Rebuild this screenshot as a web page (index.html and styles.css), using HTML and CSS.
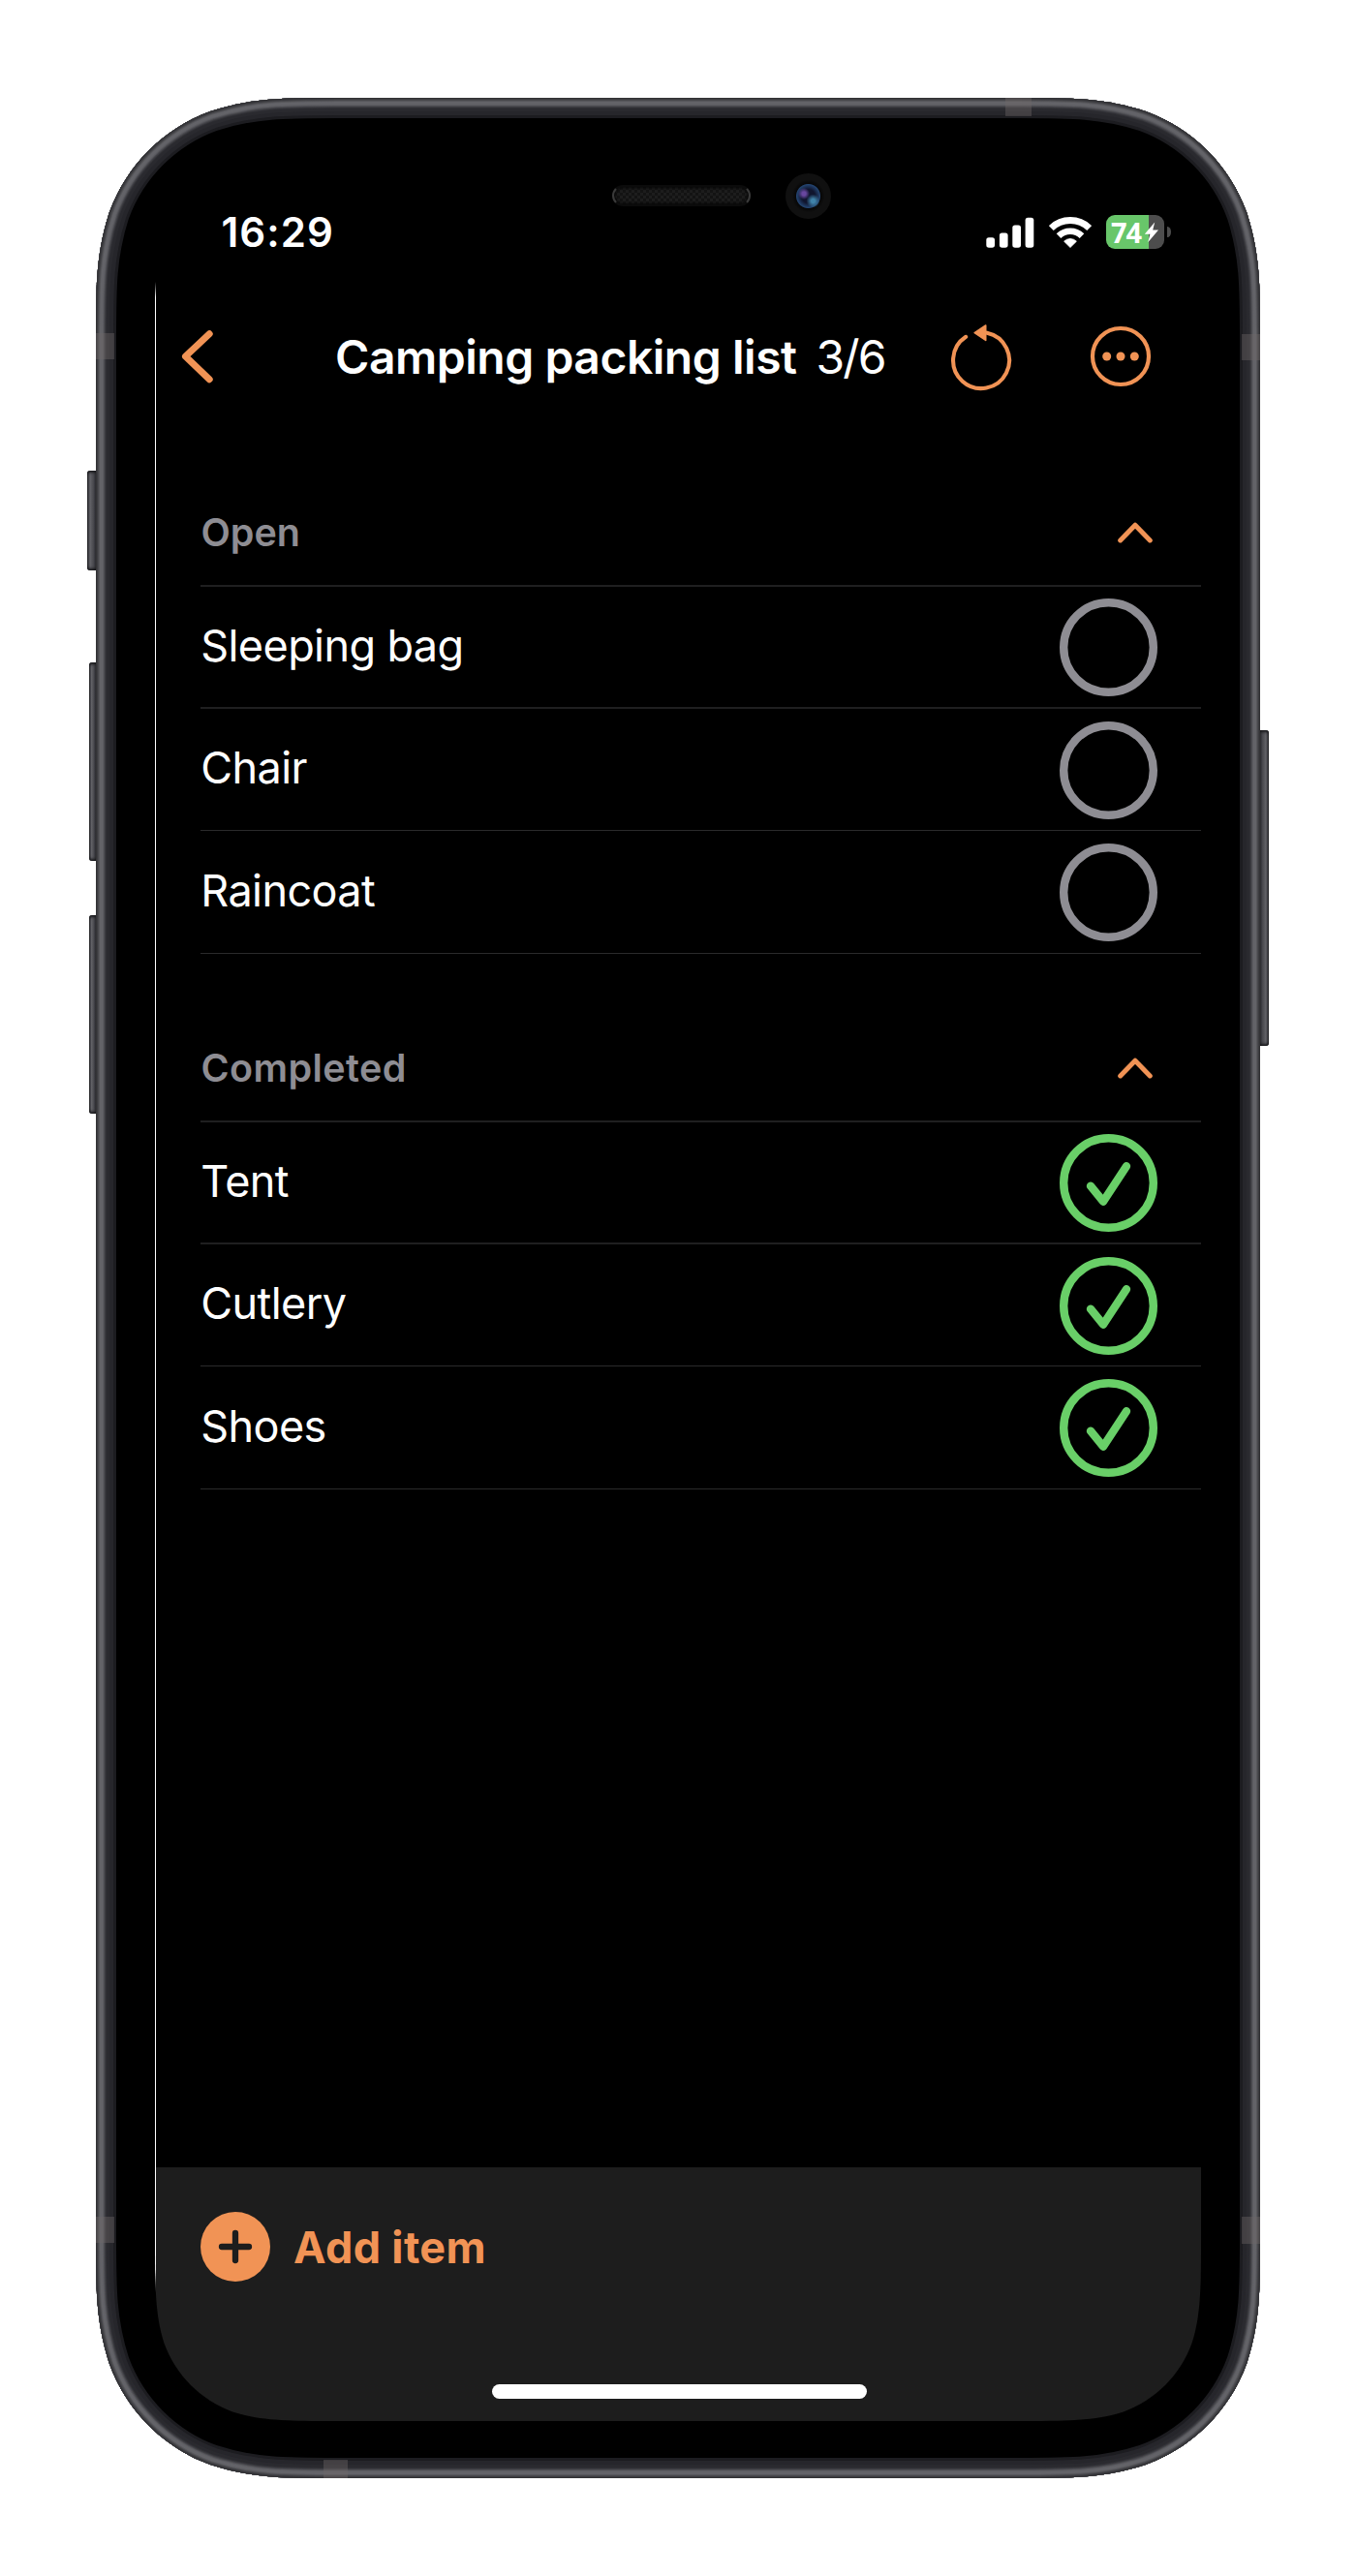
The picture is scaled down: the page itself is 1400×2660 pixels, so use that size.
FILE: index.html
```html
<!DOCTYPE html>
<html lang="en">
<head>
<meta charset="utf-8">
<title>Camping packing list</title>
<link rel="stylesheet" href="styles.css">
</head>
<body>
<div class="phone">
  <svg class="rim" width="1202" height="2458" viewBox="0 0 1202 2458">
    <defs>
      <path id="body" d="M0 250C0 195 0 161 14 118.1C31.6 69.7 69.7 31.6 118.1 14C161 0 195 0 250 0H952C1007 0 1041 0 1083.9 14C1132.3 31.6 1170.4 69.7 1188 118.1C1202 161 1202 195 1202 250V2208C1202 2263 1202 2297 1188 2339.9C1170.4 2388.3 1132.3 2426.4 1083.9 2444C1041 2458 1007 2458 952 2458H250C195 2458 161 2458 118.1 2444C69.7 2426.4 31.6 2388.3 14 2339.9C0 2297 0 2263 0 2208Z"/>
      <clipPath id="edge"><use href="#body"/></clipPath>
    </defs>
    <g clip-path="url(#edge)" fill="none">
      <use href="#body" fill="#000"/>
      <use href="#body" stroke="#1c1c20" stroke-width="42"/>
      <use href="#body" stroke="#26262b" stroke-width="36"/>
      <use href="#body" stroke="#2a2a2f" stroke-width="28"/>
      <use href="#body" stroke="#313136" stroke-width="22"/>
      <use href="#body" stroke="#3d3d42" stroke-width="20"/>
      <use href="#body" stroke="#4d4d52" stroke-width="18"/>
      <use href="#body" stroke="#5c5c61" stroke-width="16"/>
      <use href="#body" stroke="#636368" stroke-width="14"/>
      <use href="#body" stroke="#57575b" stroke-width="8"/>
      <use href="#body" stroke="#48484c" stroke-width="6"/>
      <use href="#body" stroke="#3c3c40" stroke-width="4"/>
      <use href="#body" stroke="#333336" stroke-width="2"/>
    </g>
  </svg>
  <span class="key key-mute"></span>
  <span class="key key-up"></span>
  <span class="key key-down"></span>
  <span class="key key-power"></span>
  <span class="band band-top"></span>
  <span class="band band-bottom"></span>
  <span class="band band-left-top"></span>
  <span class="band band-left-bottom"></span>
  <span class="band band-right-top"></span>
  <span class="band band-right-bottom"></span>
  <span class="speaker"></span>
  <span class="camera"></span>

  <main class="screen">
    <div class="status">
      <span class="time">16:29</span>
      <div class="status-icons">
        <svg class="signal" width="50" height="34" viewBox="0 0 50 34" fill="#fff">
          <rect x="0.3" y="22.2" width="8.7" height="10.5" rx="2.6"/>
          <rect x="13.9" y="17.5" width="8.7" height="15.2" rx="2.6"/>
          <rect x="27.3" y="9.5" width="8.7" height="23.2" rx="2.6"/>
          <rect x="40.6" y="1.8" width="8.7" height="30.9" rx="2.6"/>
        </svg>
        <svg class="wifi" width="44" height="34" viewBox="0 0 44 34" fill="none" stroke="#fff">
          <path d="M2.3 12.6A28.3 28.3 0 0 1 41.7 12.6" stroke-width="7"/>
          <path d="M10 20.6A17.2 17.2 0 0 1 34 20.6" stroke-width="6.6"/>
          <path d="M22 32.5L15.6 26.2A9 9 0 0 1 28.4 26.2Z" fill="#fff" stroke-width="0.8" stroke-linejoin="round"/>
        </svg>
        <div class="battery">
          <span class="level">74</span>
          <svg class="bolt" width="16" height="22" viewBox="0 0 16 22"><path d="M11.2 .6L.8 12.8H6.4L4.2 21.2L15 8.4H9.2Z" fill="#fff"/></svg>
        </div>
        <span class="nub"></span>
      </div>
    </div>

    <header class="nav">
      <svg class="back" width="34" height="56" viewBox="0 0 34 56"><path d="M29.2 4.8L4.5 28L29.2 51.7" fill="none" stroke="#f19355" stroke-width="7" stroke-linecap="round" stroke-linejoin="round"/></svg>
      <h1 class="title">Camping packing list</h1>
      <span class="count">3/6</span>
      <svg class="reset" width="64" height="72" viewBox="0 0 64 72">
        <path d="M16.2 15.8A29 29 0 1 0 38 11.7" fill="none" stroke="#f19355" stroke-width="4.1" stroke-linecap="round"/>
        <path d="M25.2 11.7L36.7 4V19.4Z" fill="#f19355" stroke="#f19355" stroke-width="1.6" stroke-linejoin="round"/>
      </svg>
      <svg class="more" width="64" height="64" viewBox="0 0 64 64" fill="#f19355">
        <circle cx="32" cy="32" r="29" fill="none" stroke="#f19355" stroke-width="4.2"/>
        <circle cx="17.7" cy="32" r="4.5"/><circle cx="32" cy="32" r="4.5"/><circle cx="46.3" cy="32" r="4.5"/>
      </svg>
    </header>

    <section class="group">
      <div class="group-head"><h2 class="group-name">Open</h2>
        <svg class="caret" width="36" height="22" viewBox="0 0 36 22"><path d="M2.7 18.9L18 3.2L33.3 18.9"/></svg></div>
      <ul class="items">
        <li class="item"><span class="label">Sleeping bag</span><svg class="check" viewBox="0 0 101 101"><circle cx="50.5" cy="50.5" r="46.3"/></svg></li>
        <li class="item"><span class="label">Chair</span><svg class="check" viewBox="0 0 101 101"><circle cx="50.5" cy="50.5" r="46.3"/></svg></li>
        <li class="item"><span class="label">Raincoat</span><svg class="check" viewBox="0 0 101 101"><circle cx="50.5" cy="50.5" r="46.3"/></svg></li>
      </ul>
    </section>

    <section class="group">
      <div class="group-head"><h2 class="group-name wide">Completed</h2>
        <svg class="caret" width="36" height="22" viewBox="0 0 36 22"><path d="M2.7 18.9L18 3.2L33.3 18.9"/></svg></div>
      <ul class="items">
        <li class="item"><span class="label">Tent</span><svg class="check done" viewBox="0 0 101 101"><circle cx="50.5" cy="50.5" r="46.3"/><path d="M32 53.7L45 69.7L69 33.2"/></svg></li>
        <li class="item"><span class="label">Cutlery</span><svg class="check done" viewBox="0 0 101 101"><circle cx="50.5" cy="50.5" r="46.3"/><path d="M32 53.7L45 69.7L69 33.2"/></svg></li>
        <li class="item"><span class="label">Shoes</span><svg class="check done" viewBox="0 0 101 101"><circle cx="50.5" cy="50.5" r="46.3"/><path d="M32 53.7L45 69.7L69 33.2"/></svg></li>
      </ul>
    </section>

    <footer class="toolbar">
      <div class="add">
        <svg class="plus" width="72" height="72" viewBox="0 0 72 72"><circle cx="36" cy="36" r="36" fill="#f19355"/><path d="M22 36H50M36 22V50" stroke="#1d1d1d" stroke-width="6.3" stroke-linecap="round"/></svg>
        <span class="add-label">Add item</span>
      </div>
      <span class="home"></span>
    </footer>
  </main>
</div>
</body>
</html>
```
FILE: styles.css
```css
* { box-sizing: border-box; }
body {
  margin: 0;
  padding: 101px 99px;
  background: #fff;
  color: #fff;
  font-family: Inter, "Liberation Sans", sans-serif;
}
h1, h2, ul { margin: 0; padding: 0; font: inherit; list-style: none; }
svg { display: block; flex: none; }

/* Device body: concentric strokes in .rim shade the metal edge */
.phone {
  position: relative;
  width: 1202px;
  height: 2458px;
  padding: 59px 61px;
}
.rim { position: absolute; left: 0; top: 0; }
.key {
  position: absolute;
  border-radius: 3px 0 0 3px;
  background: linear-gradient(90deg, #2b2b2e, #626267 35%, #505055 60%, #37373b);
  box-shadow: inset 0 3px 3px -1px #18181b, inset 0 -3px 3px -1px #18181b;
}
.key-mute { left: -9px; top: 385px; width: 9px; height: 103px; }
.key-up { left: -7px; top: 583px; width: 7px; height: 205px; }
.key-down { left: -7px; top: 844px; width: 7px; height: 205px; }
.key-power { right: -9px; top: 653px; width: 9px; height: 326px; transform: scaleX(-1); }

.band { position: absolute; width: 19px; height: 27px; background: rgba(112, 104, 104, .4); }
.band-top { left: 939px; top: 0; width: 27px; height: 19px; }
.band-bottom { left: 235px; bottom: 0; width: 25px; height: 19px; }
.band-left-top { left: 0; top: 243px; }
.band-left-bottom { left: 0; top: 2188px; }
.band-right-top { right: 0; top: 244px; }
.band-right-bottom { right: 0; top: 2188px; height: 28px; }

.speaker {
  position: absolute;
  left: 533px;
  top: 90px;
  width: 143px;
  height: 22px;
  border-radius: 11px;
  border: 2px solid #0b0b0b;
  border-left-color: #3a3a3a;
  border-right-color: #3a3a3a;
  background: repeating-conic-gradient(#1d1d1d 0 25%, #131313 0 50%) 0 0 / 6px 6px;
  box-shadow: inset 0 0 3px 1px #050505;
}
.camera {
  position: absolute;
  left: 712px;
  top: 78px;
  width: 47px;
  height: 47px;
  border-radius: 50%;
  background:
    radial-gradient(circle at 19px 21px, #68479f 0 2px, transparent 6px),
    radial-gradient(circle at 28.5px 28.5px, #3f82a8 0 2px, transparent 7px),
    radial-gradient(circle at 50% 50%, #10152e 0 7px, #23436f 12px, #070707 13px, #101010 17px);
}

.screen {
  position: relative;
  display: flex;
  flex-direction: column;
  width: 1080px;
  height: 2340px;
  clip-path: path("M0 0H1080V2145.9C1080 2201.8 1080 2229.7 1070.5 2259.8C1058.5 2292.7 1032.7 2318.5 999.8 2330.5C969.7 2340 941.8 2340 885.9 2340H194.1C138.2 2340 110.3 2340 80.2 2330.5C47.3 2318.5 21.5 2292.7 9.5 2259.8C0 2229.7 0 2201.8 0 2145.9Z");
}
/* Hairline along the display's left edge */
.screen::before {
  content: "";
  position: absolute;
  left: 0;
  top: 131px;
  width: 1px;
  height: 2077px;
  background: linear-gradient(transparent, #fff 16px, #fff calc(100% - 24px), transparent);
}

.status {
  display: flex;
  align-items: center;
  justify-content: space-between;
  height: 159px;
  padding: 0 31px 0 68.5px;
}
.time { font-size: 42px; font-weight: 600; letter-spacing: 1.05px; }
.status-icons { display: flex; align-items: center; }
.wifi { margin-left: 15px; }
.battery {
  display: flex;
  align-items: center;
  width: 60px;
  height: 35px;
  margin-left: 15px;
  padding-left: 5px;
  border-radius: 9px;
  background: linear-gradient(90deg, #68c66a 44px, #4d4d4d 44px);
}
.level { font: 700 29px/35px "Noto Sans", sans-serif; letter-spacing: -1.2px; }
.bolt { margin-left: 3px; }
.nub { width: 4px; height: 11px; margin-left: 3px; border-radius: 0 4px 4px 0 / 0 6px 6px 0; background: #4d4d4d; }

.nav { display: flex; align-items: center; height: 98px; padding-left: 27px; }
.title { margin-left: 125px; font-size: 48px; font-weight: 600; letter-spacing: -.47px; white-space: nowrap; }
.count { margin-left: 20px; font-size: 48px; letter-spacing: -1.9px; }
.reset { margin-left: auto; }
.more { margin: 0 51px 0 80px; }

.group { padding-left: 47px; }
.group + .group { margin-top: 62px; }
.nav + .group { margin-top: 77px; }
.group-head {
  display: flex;
  align-items: center;
  justify-content: space-between;
  height: 112px;
  padding: 2px 50px 0 0;
  border-bottom: 2px solid #1f1f20;
}
.group-name { padding-left: .5px; font-size: 39.5px; font-weight: 600; color: #8e8d93; }
.wide { letter-spacing: .42px; }
.caret { fill: none; stroke: #f19355; stroke-width: 5; stroke-linecap: round; stroke-linejoin: round; }
.item {
  display: flex;
  align-items: center;
  justify-content: space-between;
  height: 126px;
  padding-right: 45px;
  border-bottom: 1px solid #2a2a2b;
}
.item:first-child { border-bottom: 2px solid #1f1f20; }
.item:last-child { height: 127px; }
.label { padding: 0 0 4px .3px; font-size: 45px; letter-spacing: -.6px; }
.check { width: 101px; height: 101px; margin-top: 1px; fill: none; stroke: #8e8d93; stroke-width: 8.4; stroke-linecap: round; stroke-linejoin: round; }
.done { stroke: #69cf68; }

.toolbar {
  display: flex;
  flex-direction: column;
  justify-content: space-between;
  height: 262px;
  margin-top: auto;
  padding: 46px 47px 23px;
  background: #1d1d1d;
}
.add { display: flex; align-items: center; gap: 24px; height: 72px; }
.add-label { font-size: 45px; font-weight: 700; letter-spacing: .35px; color: #f19355; }
.home { align-self: center; width: 387px; height: 15px; margin-left: 2px; border-radius: 8px; background: #fff; }
```
